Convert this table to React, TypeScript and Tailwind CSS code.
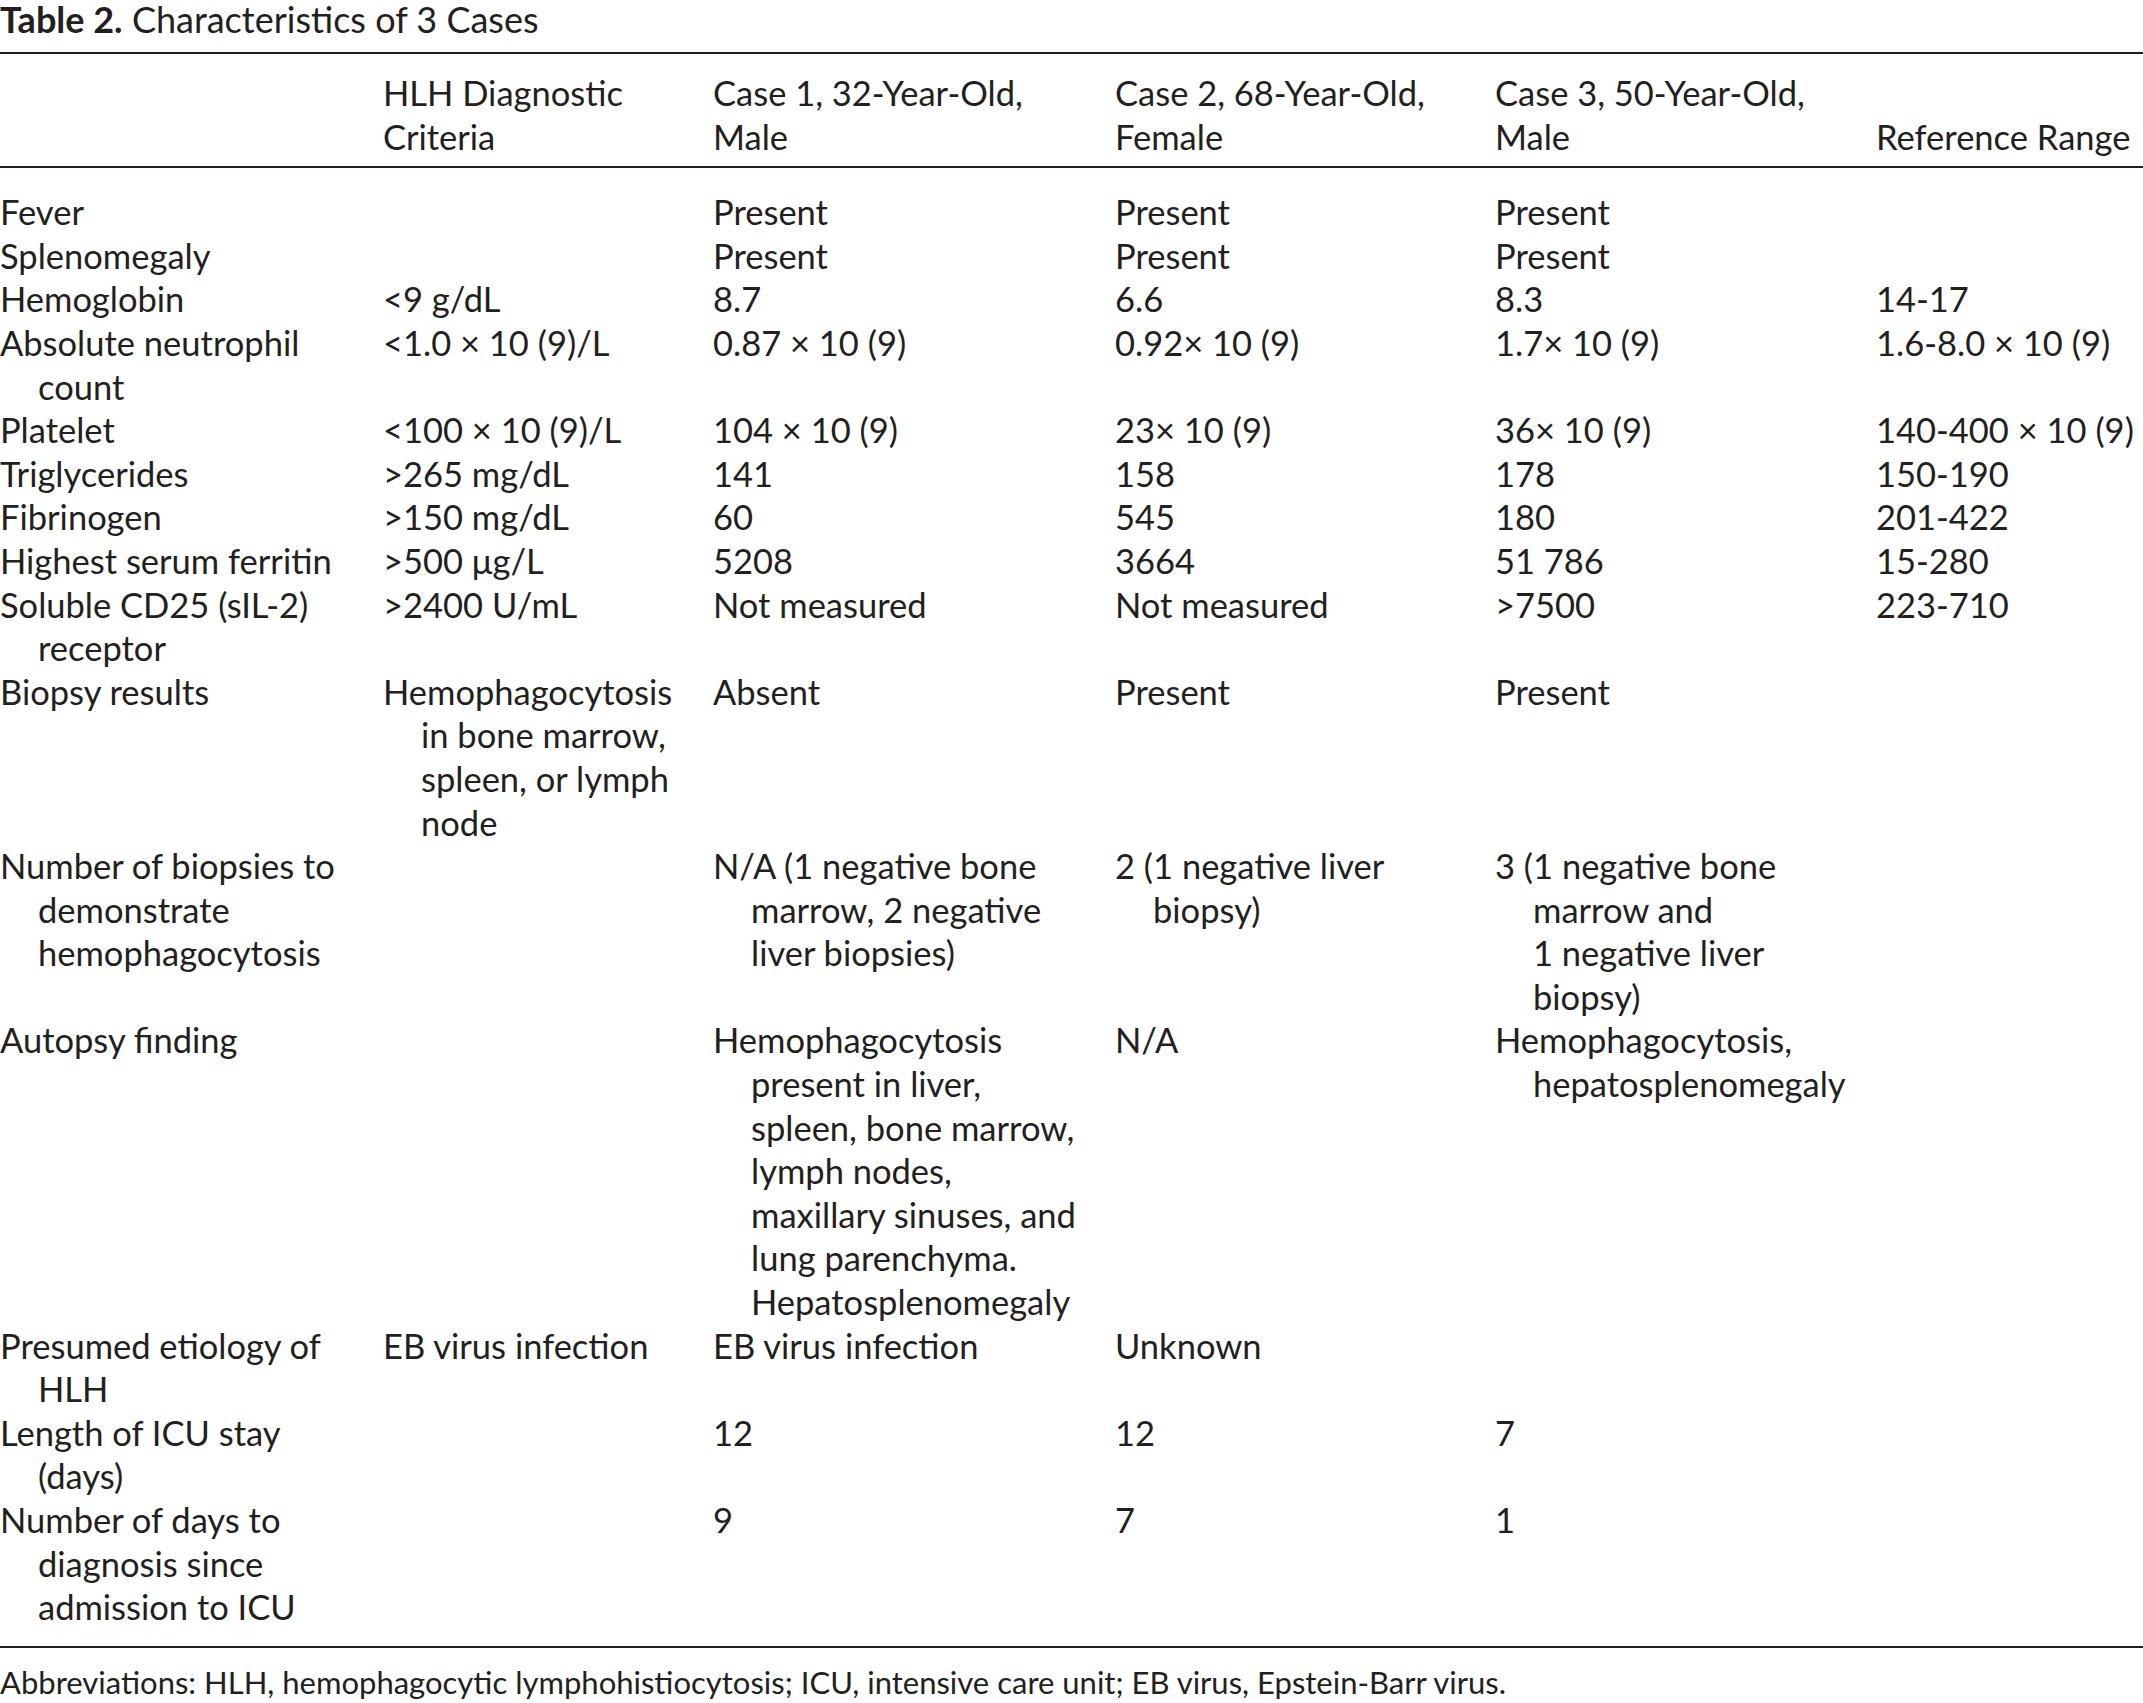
import React from 'react';

type Row = string[][];

const header: Row = [
  [],
  ['HLH Diagnostic', 'Criteria'],
  ['Case 1, 32-Year-Old,', 'Male'],
  ['Case 2, 68-Year-Old,', 'Female'],
  ['Case 3, 50-Year-Old,', 'Male'],
  ['Reference Range'],
];

const rows: Row[] = [
  [['Fever'], [], ['Present'], ['Present'], ['Present'], []],
  [['Splenomegaly'], [], ['Present'], ['Present'], ['Present'], []],
  [['Hemoglobin'], ['<9 g/dL'], ['8.7'], ['6.6'], ['8.3'], ['14-17']],
  [
    ['Absolute neutrophil', 'count'],
    ['<1.0 × 10 (9)/L'],
    ['0.87 × 10 (9)'],
    ['0.92× 10 (9)'],
    ['1.7× 10 (9)'],
    ['1.6-8.0 × 10 (9)'],
  ],
  [['Platelet'], ['<100 × 10 (9)/L'], ['104 × 10 (9)'], ['23× 10 (9)'], ['36× 10 (9)'], ['140-400 × 10 (9)']],
  [['Triglycerides'], ['>265 mg/dL'], ['141'], ['158'], ['178'], ['150-190']],
  [['Fibrinogen'], ['>150 mg/dL'], ['60'], ['545'], ['180'], ['201-422']],
  [['Highest serum ferritin'], ['>500 μg/L'], ['5208'], ['3664'], ['51 786'], ['15-280']],
  [
    ['Soluble CD25 (sIL-2)', 'receptor'],
    ['>2400 U/mL'],
    ['Not measured'],
    ['Not measured'],
    ['>7500'],
    ['223-710'],
  ],
  [
    ['Biopsy results'],
    ['Hemophagocytosis', 'in bone marrow,', 'spleen, or lymph', 'node'],
    ['Absent'],
    ['Present'],
    ['Present'],
    [],
  ],
  [
    ['Number of biopsies to', 'demonstrate', 'hemophagocytosis'],
    [],
    ['N/A (1 negative bone', 'marrow, 2 negative', 'liver biopsies)'],
    ['2 (1 negative liver', 'biopsy)'],
    ['3 (1 negative bone', 'marrow and', '1 negative liver', 'biopsy)'],
    [],
  ],
  [
    ['Autopsy finding'],
    [],
    [
      'Hemophagocytosis',
      'present in liver,',
      'spleen, bone marrow,',
      'lymph nodes,',
      'maxillary sinuses, and',
      'lung parenchyma.',
      'Hepatosplenomegaly',
    ],
    ['N/A'],
    ['Hemophagocytosis,', 'hepatosplenomegaly'],
    [],
  ],
  [['Presumed etiology of', 'HLH'], ['EB virus infection'], ['EB virus infection'], ['Unknown'], [], []],
  [['Length of ICU stay', '(days)'], [], ['12'], ['12'], ['7'], []],
  [['Number of days to', 'diagnosis since', 'admission to ICU'], [], ['9'], ['7'], ['1'], []],
];

const gridCols = 'grid grid-cols-[383px_330px_402px_380px_381px_1fr]';

// continuation lines get a hanging indent, header lines do not
const Cell: React.FC<{ lines: string[]; hang?: boolean }> = ({ lines, hang = true }) => (
  <div className="whitespace-nowrap">
    {lines.map((l, i) => (
      <div key={i} className={hang && i > 0 ? 'pl-[38px]' : ''}>
        {l}
      </div>
    ))}
  </div>
);

export default function App() {
  return (
    <div
      className="w-[2143px] min-h-[1703px] bg-white text-[#231f20] text-[34.5px] leading-[43.6px]"
      style={{ fontFamily: 'Lato, "Open Sans", sans-serif' }}
    >
      <div className="leading-[38px] text-[36px] mb-[14px]">
        <span className="font-bold">Table 2.</span> Characteristics of 3 Cases
      </div>

      <div className="border-t-2 border-[#231f20] pt-[17px] pb-[8px]">
        <div className={gridCols}>
          {header.map((c, i) => (
            <div key={i} className="flex flex-col justify-end">
              <Cell lines={c} hang={false} />
            </div>
          ))}
        </div>
      </div>

      <div className="border-t-2 border-[#231f20] pt-[22px] pb-[17px]">
        {rows.map((r, i) => (
          <div key={i} className={gridCols}>
            {r.map((c, j) => (
              <Cell key={j} lines={c} />
            ))}
          </div>
        ))}
      </div>

      <div className="border-t-2 border-[#231f20] pt-[13px] text-[31px]">
        Abbreviations: HLH, hemophagocytic lymphohistiocytosis; ICU, intensive care unit; EB virus, Epstein-Barr virus.
      </div>
    </div>
  );
}
